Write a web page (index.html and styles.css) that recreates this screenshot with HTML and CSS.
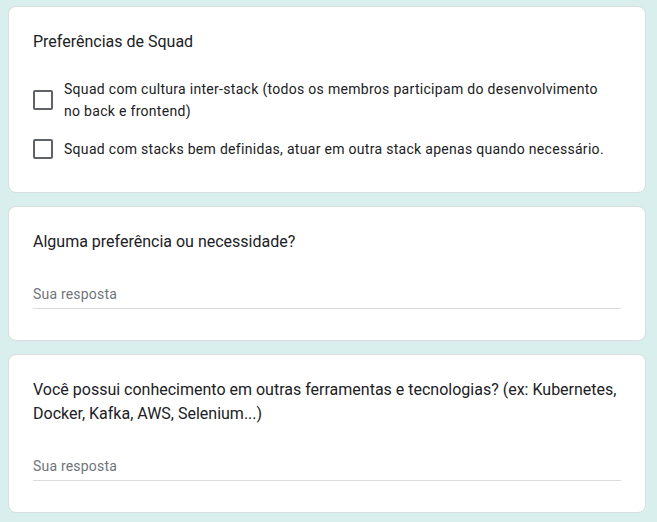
FILE: index.html
```html
<!DOCTYPE html>
<html lang="pt">
<head>
<meta charset="utf-8">
<link rel="stylesheet" href="styles.css">
</head>
<body>
<main class="form">
  <section class="card">
    <div class="title">Preferências de Squad</div>
    <div class="options">
      <label class="option">
        <span class="box"></span>
        <span class="opt-text">Squad com cultura inter-stack (todos os membros participam do desenvolvimento no back e frontend)</span>
      </label>
      <label class="option">
        <span class="box"></span>
        <span class="opt-text">Squad com stacks bem definidas, atuar em outra stack apenas quando necessário.</span>
      </label>
    </div>
  </section>
  <section class="card">
    <div class="title">Alguma preferência ou necessidade?</div>
    <div class="answer"><span class="placeholder">Sua resposta</span></div>
  </section>
  <section class="card">
    <div class="title">Você possui conhecimento em outras ferramentas e tecnologias? (ex: Kubernetes, Docker, Kafka, AWS, Selenium...)</div>
    <div class="answer"><span class="placeholder">Sua resposta</span></div>
  </section>
</main>
</body>
</html>
```
FILE: styles.css
```css
html, body {
  margin: 0;
  padding: 0;
  background: #d9efed;
}
body {
  font-family: Roboto, "Noto Sans", Arial, sans-serif;
  color: #202124;
}
.form {
  display: flex;
  flex-direction: column;
  gap: 13px;
  width: 638px;
  padding: 6px 0 0 8px;
}
.card {
  background: #fff;
  border: 1px solid #dadce0;
  border-radius: 8px;
  padding: 23px 24px 24px 24px;
}
.title {
  font-size: 16px;
  line-height: 24px;
  letter-spacing: 0;
}
.options {
  margin-top: 16px;
  display: flex;
  flex-direction: column;
}
.option {
  display: flex;
  align-items: center;
  padding: 8px 16px 8px 0;
}
.box {
  flex: 0 0 auto;
  width: 16px;
  height: 16px;
  border: 2px solid #5f6368;
  border-radius: 2px;
  margin-right: 11px;
}
.opt-text {
  font-size: 14px;
  line-height: 22px;
  letter-spacing: 0.3px;
}
.answer {
  margin-top: 30px;
  margin-bottom: 7px;
  padding-bottom: 4px;
  border-bottom: 1px solid #dadce0;
}
.placeholder {
  display: block;
  font-size: 14px;
  line-height: 20px;
  color: #70757a;
  letter-spacing: 0.2px;
}
```
